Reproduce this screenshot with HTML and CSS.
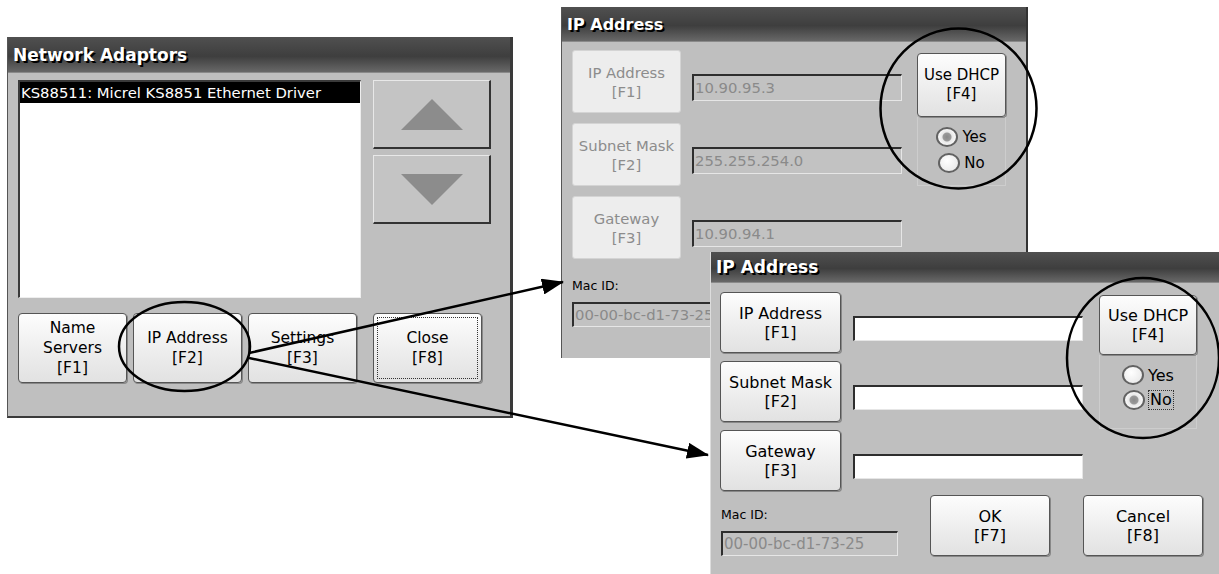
FILE: index.html
```html
<!DOCTYPE html>
<html lang="en">
<head>
  <meta charset="UTF-8">
  <meta name="viewport" content="width=device-width, initial-scale=1.0">
  <title>Network Adaptors - IP Address</title>
  <link rel="stylesheet" href="styles.css">
</head>
<body>
  <div class="desk">

    <!-- Network Adaptors dialog -->
    <div class="win win-adaptors">
      <div class="titlebar">Network Adaptors</div>
      <div class="na-body">
        <div class="listbox">
          <div class="list-item selected">KS88511: Micrel KS8851 Ethernet Driver</div>
        </div>
        <div class="scroll-btns">
          <button class="btn btn-scroll">
            <svg width="62" height="31" viewBox="0 0 62 31"><polygon points="31,0 62,31 0,31" fill="#8c8c8c"/></svg>
          </button>
          <button class="btn btn-scroll">
            <svg width="62" height="31" viewBox="0 0 62 31"><polygon points="0,0 62,0 31,31" fill="#8c8c8c"/></svg>
          </button>
        </div>
        <div class="na-actions">
          <button class="btn na-btn">Name<br>Servers<br>[F1]</button>
          <button class="btn na-btn">IP Address<br>[F2]</button>
          <button class="btn na-btn">Settings<br>[F3]</button>
        </div>
        <button class="btn na-btn btn-focus">Close<br>[F8]</button>
      </div>
    </div>

    <!-- IP Address dialog, DHCP on (fields disabled) -->
    <div class="win win-dhcp">
      <div class="titlebar">IP Address</div>
      <div class="ip-body">
        <div class="ip-grid">
          <button class="btn btn-off">IP Address<br>[F1]</button>
          <div class="field field-off">10.90.95.3</div>
          <div class="dhcp-col">
            <button class="btn dhcp-btn">Use DHCP<br>[F4]</button>
            <div class="radio-box">
              <label class="radio-row"><span class="radio checked"></span>Yes</label>
              <label class="radio-row"><span class="radio"></span>No</label>
            </div>
          </div>
          <button class="btn btn-off">Subnet Mask<br>[F2]</button>
          <div class="field field-off">255.255.254.0</div>
          <button class="btn btn-off">Gateway<br>[F3]</button>
          <div class="field field-off">10.90.94.1</div>
        </div>
        <div class="mac">
          <div class="mac-label">Mac ID:</div>
          <div class="field field-off mac-field">00-00-bc-d1-73-25</div>
        </div>
      </div>
    </div>

    <!-- IP Address dialog, DHCP off (fields editable) -->
    <div class="win win-manual">
      <div class="titlebar">IP Address</div>
      <div class="ip-body">
        <div class="ip-grid">
          <button class="btn">IP Address<br>[F1]</button>
          <div class="field"></div>
          <div class="dhcp-col">
            <button class="btn dhcp-btn">Use DHCP<br>[F4]</button>
            <div class="radio-box">
              <label class="radio-row"><span class="radio"></span>Yes</label>
              <label class="radio-row"><span class="radio checked"></span><span class="focus-text">No</span></label>
            </div>
          </div>
          <button class="btn">Subnet Mask<br>[F2]</button>
          <div class="field"></div>
          <button class="btn">Gateway<br>[F3]</button>
          <div class="field"></div>
        </div>
        <div class="ip-footer">
          <div class="mac">
            <div class="mac-label">Mac ID:</div>
            <div class="field field-off mac-field">00-00-bc-d1-73-25</div>
          </div>
          <button class="btn foot-btn">OK<br>[F7]</button>
          <button class="btn foot-btn">Cancel<br>[F8]</button>
        </div>
      </div>
    </div>

    <!-- callout marks drawn over the screenshots -->
    <svg class="notes" width="1219" height="574" viewBox="0 0 1219 574">
      <defs>
        <marker id="head" markerWidth="22" markerHeight="16" refX="21" refY="8" orient="auto" markerUnits="userSpaceOnUse">
          <path d="M0,0 L22,8 L0,16 z" fill="#000"/>
        </marker>
      </defs>
      <ellipse cx="184.5" cy="346.5" rx="65.5" ry="44.5" fill="none" stroke="#000" stroke-width="2.5"/>
      <ellipse cx="958.5" cy="108.5" rx="78" ry="80" fill="none" stroke="#000" stroke-width="2.5"/>
      <ellipse cx="1143" cy="358" rx="76" ry="80" fill="none" stroke="#000" stroke-width="2.5"/>
      <line x1="249" y1="353" x2="563" y2="282" stroke="#000" stroke-width="2.5" marker-end="url(#head)"/>
      <line x1="249" y1="358" x2="708" y2="455" stroke="#000" stroke-width="2.5" marker-end="url(#head)"/>
    </svg>
  </div>
</body>
</html>
```

FILE: styles.css
```css
body {
  margin: 0;
  background-color: #fff;
  font-family: "DejaVu Sans", Verdana, sans-serif;
  color: #000;
}

.desk {
  position: relative;
  width: 1219px;
  height: 574px;
  overflow: hidden;
}

/* dialog windows */
.win {
  position: absolute;
  box-sizing: border-box;
  background-color: #bfbfbf;
  border-left: 1px solid #555;
}

.titlebar {
  display: flex;
  align-items: center;
  box-sizing: border-box;
  padding-left: 5px;
  background: linear-gradient(#505050, #3e3e3e 55%, #686868);
  border-bottom: 1px solid #8a8a8a;
  color: #fff;
  font-weight: bold;
  text-shadow: 2px 2px 0 #000;
}

/* generic button */
.btn {
  display: flex;
  align-items: center;
  justify-content: center;
  box-sizing: border-box;
  padding: 0;
  background: linear-gradient(#fdfdfd, #ececec 60%, #e2e2e2);
  border: 1px solid #555;
  border-radius: 4px;
  box-shadow: 1px 1px 0 #888;
  font-family: "DejaVu Sans", Verdana, sans-serif;
  color: #000;
  text-align: center;
  cursor: pointer;
}

.btn-focus {
  outline: 1px dotted #333;
  outline-offset: -5px;
}

.btn-off {
  background: #ededed;
  border: 1px solid #d4d4d4;
  border-radius: 3px;
  box-shadow: none;
  color: #8c8c8c;
}

/* text fields */
.field {
  box-sizing: border-box;
  background-color: #fff;
  border-top: 2px solid #2e2e2e;
  border-left: 2px solid #2e2e2e;
  border-right: 1px solid #e6e6e6;
  border-bottom: 1px solid #e6e6e6;
  padding-left: 1px;
  white-space: nowrap;
  overflow: hidden;
}

.field-off {
  background-color: #c2c2c2;
  color: #8a8a8a;
}

/* ---- Network Adaptors ---- */
.win-adaptors {
  left: 7px;
  top: 37px;
  width: 506px;
  height: 381px;
  border-right: 3px solid #3a3a3a;
  border-bottom: 2px solid #3a3a3a;
}

.win-adaptors .titlebar {
  height: 36px;
  font-size: 17px;
}

.na-body {
  display: grid;
  grid-template-columns: 343px 118px;
  grid-template-rows: 218px 70px;
  column-gap: 12px;
  row-gap: 15px;
  padding: 7px 0 0 10px;
}

.listbox {
  box-sizing: border-box;
  background-color: #fff;
  border-top: 2px solid #3a3a3a;
  border-left: 2px solid #3a3a3a;
  border-right: 1px solid #eee;
  border-bottom: 1px solid #eee;
}

.list-item {
  height: 21px;
  line-height: 21px;
  padding-left: 1px;
  font-size: 14.8px;
  white-space: nowrap;
}

.list-item.selected {
  background-color: #000;
  color: #fff;
}

.scroll-btns {
  display: flex;
  flex-direction: column;
  gap: 6px;
}

.btn-scroll {
  height: 69px;
  background: #c4c4c4;
  border: 1px solid #e8e8e8;
  border-right: 2px solid #333;
  border-bottom: 2px solid #333;
  border-radius: 0;
  box-shadow: none;
}

.na-actions {
  display: flex;
  gap: 6px;
}

.na-btn {
  width: 109px;
  font-size: 15.5px;
  line-height: 20px;
}

/* ---- IP Address dialogs ---- */
.ip-grid {
  display: grid;
  align-items: start;
}

.dhcp-col {
  grid-row: 1 / span 2;
  grid-column: 3;
  display: flex;
  flex-direction: column;
}

.radio-box {
  display: flex;
  flex-direction: column;
  align-items: center;
  border: 1px solid #cdcdcd;
  border-top: none;
}

.radio-row {
  display: flex;
  align-items: center;
  gap: 4px;
}

.radio {
  box-sizing: border-box;
  width: 22px;
  height: 20px;
  border: 2px solid #626262;
  border-radius: 50%;
  background: radial-gradient(circle at 40% 35%, #fff, #e4e4e4);
}

.radio.checked {
  background: radial-gradient(circle, #8a8a8a 0, #9a9a9a 4px, #e8e8e8 5px, #fafafa 9px);
}

.focus-text {
  outline: 1px dotted #333;
  line-height: 18px;
  padding: 0 1px;
}

.mac-label {
  font-size: 12.5px;
}

/* DHCP on */
.win-dhcp {
  left: 561px;
  top: 7px;
  width: 467px;
  height: 351px;
  border-right: 2px solid #333;
}

.win-dhcp .titlebar {
  height: 35px;
  font-size: 16px;
}

.win-dhcp .ip-body {
  padding: 8px 0 0 10px;
}

.win-dhcp .ip-grid {
  grid-template-columns: 109px 210px 93px;
  grid-auto-rows: 63px;
  column-gap: 11px;
  row-gap: 10px;
}

.win-dhcp .ip-grid > .btn {
  height: 63px;
  font-size: 14.8px;
  line-height: 19px;
}

.win-dhcp .field {
  height: 27px;
  margin-top: 24px;
  font-size: 14.8px;
  line-height: 24px;
}

.win-dhcp .ip-grid > .field {
  width: 210px;
}

.win-dhcp .dhcp-col {
  margin-left: 4px;
  padding-top: 3px;
}

.win-dhcp .dhcp-btn {
  height: 64px;
  font-size: 15px;
  line-height: 19px;
}

.win-dhcp .radio-box {
  height: 58px;
  padding-top: 10px;
  gap: 6px;
  font-size: 15px;
}

.win-dhcp .mac {
  margin-top: 19px;
}

.win-dhcp .mac-field {
  width: 177px;
  height: 25px;
  margin-top: 9px;
  font-size: 14.8px;
  line-height: 22px;
}

/* DHCP off */
.win-manual {
  left: 710px;
  top: 252px;
  width: 509px;
  height: 322px;
  border-left: 1px solid #ddd;
}

.win-manual .titlebar {
  height: 31px;
  font-size: 17px;
}

.win-manual .ip-body {
  padding: 9px 0 0 9px;
}

.win-manual .ip-grid {
  grid-template-columns: 121px 230px 102px;
  grid-auto-rows: 60px;
  column-gap: 12px;
  row-gap: 9px;
}

.win-manual .ip-grid > .btn {
  height: 61px;
  font-size: 16px;
  line-height: 19px;
}

.win-manual .ip-grid > .field {
  height: 25px;
  margin-top: 24px;
}

.win-manual .dhcp-col {
  margin-left: 4px;
  padding-top: 3px;
}

.win-manual .dhcp-btn {
  height: 60px;
  font-size: 16px;
  line-height: 19px;
}

.win-manual .radio-box {
  height: 63px;
  padding-top: 10px;
  gap: 5px;
  font-size: 16px;
}

.ip-footer {
  display: flex;
  align-items: flex-start;
  margin-top: 5px;
}

.win-manual .mac {
  width: 177px;
  padding-left: 1px;
  padding-top: 12px;
}

.win-manual .mac-field {
  height: 25px;
  margin-top: 9px;
  font-size: 15px;
  line-height: 22px;
}

.foot-btn {
  width: 120px;
  height: 61px;
  margin-left: 32px;
  font-size: 16px;
  line-height: 19px;
}

.foot-btn + .foot-btn {
  margin-left: 33px;
}

/* callouts */
.notes {
  position: absolute;
  left: 0;
  top: 0;
  pointer-events: none;
}
```
